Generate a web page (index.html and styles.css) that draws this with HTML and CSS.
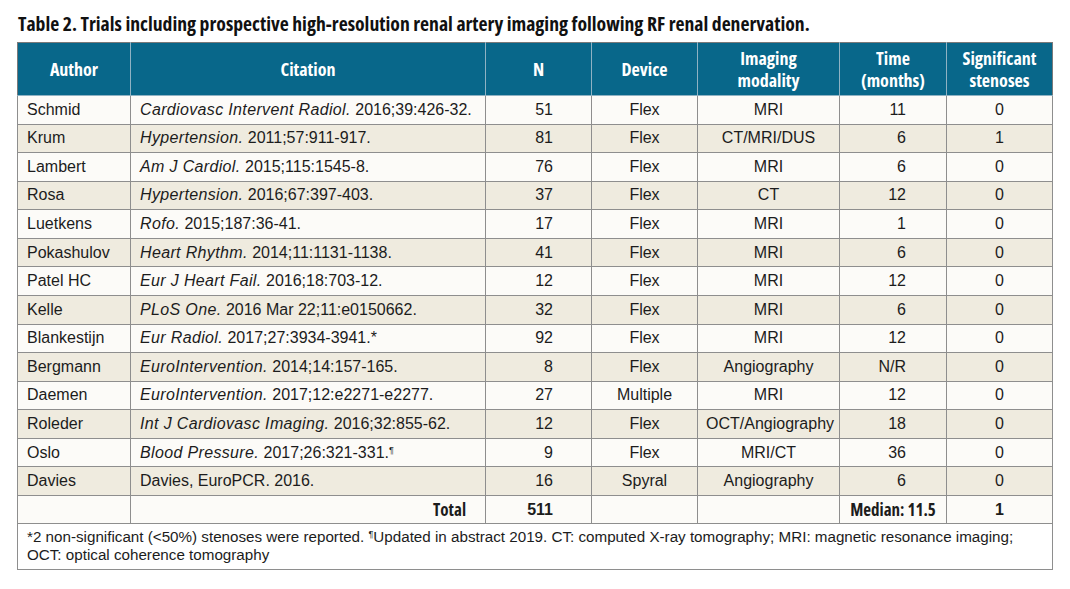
FILE: index.html
```html
<!DOCTYPE html>
<html lang="en">
<head>
<meta charset="utf-8">
<title>Table 2</title>
<link rel="stylesheet" href="styles.css">
</head>
<body>
<div class="page">
  <h1 class="caption">Table 2. Trials including prospective high-resolution renal artery imaging following RF renal denervation.</h1>
  <table class="trials">
    <colgroup>
      <col class="c-author">
      <col class="c-citation">
      <col class="c-n">
      <col class="c-device">
      <col class="c-imaging">
      <col class="c-time">
      <col class="c-sig">
    </colgroup>
    <thead>
      <tr>
        <th>Author</th>
        <th>Citation</th>
        <th>N</th>
        <th>Device</th>
        <th>Imaging<br>modality</th>
        <th>Time<br>(months)</th>
        <th>Significant<br>stenoses</th>
      </tr>
    </thead>
    <tbody>
      <tr><td class="l">Schmid</td><td class="l"><i>Cardiovasc Intervent Radiol.</i> 2016;39:426-32.</td><td class="n">51</td><td>Flex</td><td>MRI</td><td class="t">11</td><td>0</td></tr>
      <tr><td class="l">Krum</td><td class="l"><i>Hypertension.</i> 2011;57:911-917.</td><td class="n">81</td><td>Flex</td><td>CT/MRI/DUS</td><td class="t">6</td><td>1</td></tr>
      <tr><td class="l">Lambert</td><td class="l"><i>Am J Cardiol.</i> 2015;115:1545-8.</td><td class="n">76</td><td>Flex</td><td>MRI</td><td class="t">6</td><td>0</td></tr>
      <tr><td class="l">Rosa</td><td class="l"><i>Hypertension.</i> 2016;67:397-403.</td><td class="n">37</td><td>Flex</td><td>CT</td><td class="t">12</td><td>0</td></tr>
      <tr><td class="l">Luetkens</td><td class="l"><i>Rofo.</i> 2015;187:36-41.</td><td class="n">17</td><td>Flex</td><td>MRI</td><td class="t">1</td><td>0</td></tr>
      <tr><td class="l">Pokashulov</td><td class="l"><i>Heart Rhythm.</i> 2014;11:1131-1138.</td><td class="n">41</td><td>Flex</td><td>MRI</td><td class="t">6</td><td>0</td></tr>
      <tr><td class="l">Patel HC</td><td class="l"><i>Eur J Heart Fail.</i> 2016;18:703-12.</td><td class="n">12</td><td>Flex</td><td>MRI</td><td class="t">12</td><td>0</td></tr>
      <tr><td class="l">Kelle</td><td class="l"><i>PLoS One.</i> 2016 Mar 22;11:e0150662.</td><td class="n">32</td><td>Flex</td><td>MRI</td><td class="t">6</td><td>0</td></tr>
      <tr><td class="l">Blankestijn</td><td class="l"><i>Eur Radiol.</i> 2017;27:3934-3941.*</td><td class="n">92</td><td>Flex</td><td>MRI</td><td class="t">12</td><td>0</td></tr>
      <tr><td class="l">Bergmann</td><td class="l"><i>EuroIntervention.</i> 2014;14:157-165.</td><td class="n">8</td><td>Flex</td><td>Angiography</td><td class="t">N/R</td><td>0</td></tr>
      <tr><td class="l">Daemen</td><td class="l"><i>EuroIntervention.</i> 2017;12:e2271-e2277.</td><td class="n">27</td><td>Multiple</td><td>MRI</td><td class="t">12</td><td>0</td></tr>
      <tr><td class="l">Roleder</td><td class="l"><i>Int J Cardiovasc Imaging.</i> 2016;32:855-62.</td><td class="n">12</td><td>Flex</td><td>OCT/Angiography</td><td class="t">18</td><td>0</td></tr>
      <tr><td class="l">Oslo</td><td class="l"><i>Blood Pressure.</i> 2017;26:321-331.<sup class="pil">¶</sup></td><td class="n">9</td><td>Flex</td><td>MRI/CT</td><td class="t">36</td><td>0</td></tr>
      <tr><td class="l">Davies</td><td class="l">Davies, EuroPCR. 2016.</td><td class="n">16</td><td>Spyral</td><td>Angiography</td><td class="t">6</td><td>0</td></tr>
      <tr class="total"><td></td><td class="r cond">Total</td><td class="n">511</td><td></td><td></td><td class="cond">Median: 11.5</td><td>1</td></tr>
    </tbody>
    <tfoot>
      <tr><td colspan="7" class="note">*2 non-significant (&lt;50%) stenoses were reported. <sup class="pil">¶</sup>Updated in abstract 2019. CT: computed X-ray tomography; MRI: magnetic resonance imaging;<br>OCT: optical coherence tomography</td></tr>
    </tfoot>
  </table>
</div>
</body>
</html>
```
FILE: styles.css
```css
html, body {
  margin: 0;
  padding: 0;
  background: #ffffff;
}

.page {
  padding: 13px 0 0 17px;
  font-family: "Liberation Sans", Arial, sans-serif;
  color: #1c1c1c;
}

.caption {
  margin: 0 0 8px 1px;
  font-family: "Open Sans", sans-serif;
  font-stretch: 75%;
  font-weight: bold;
  font-size: 19.7px;
  line-height: 21px;
  color: #111;
}

.trials {
  border-collapse: collapse;
  table-layout: fixed;
  width: 1035px;
  border: 1.5px solid #7a7a7a;
  font-size: 16px;
}

.c-author { width: 113px; }
.c-citation { width: 355px; }
.c-n { width: 106px; }
.c-device { width: 106px; }
.c-imaging { width: 142px; }
.c-time { width: 107px; }
.c-sig { width: 106px; }

.trials thead th {
  background: #08678a;
  color: #ffffff;
  height: 52px;
  padding: 0 4px;
  font-family: "Open Sans", sans-serif;
  font-stretch: 75%;
  font-weight: bold;
  font-size: 18px;
  line-height: 22px;
  text-align: center;
  vertical-align: middle;
  border: 1px solid #8fb2c3;
  border-top-color: #7a7a7a;
}

.trials thead th:first-child { border-left-color: #7a7a7a; }
.trials thead th:last-child { border-right-color: #7a7a7a; }

.trials tbody td {
  height: 27.57px;
  padding: 0 8px;
  border: 1px solid #8e8e8e;
  text-align: center;
  vertical-align: middle;
  line-height: 18px;
  white-space: nowrap;
}

.trials tbody td i { letter-spacing: 0.35px; }

.trials tbody tr:nth-child(odd) td { background: #fcfbf8; }
.trials tbody tr:nth-child(even) td { background: #efebdf; }
.trials tbody tr.total td { background: #fcfbf8; font-weight: bold; }

.trials td.cond {
  font-family: "Open Sans", sans-serif;
  font-stretch: 75%;
  font-size: 17px;
}

.trials td.l { text-align: left; padding-left: 9px; }
.trials td.r { text-align: right; padding-right: 19px; }
.trials td.n { text-align: right; padding-right: 38px; }
.trials td.t { text-align: right; padding-right: 40px; }

.pil {
  font-size: 9px;
  font-style: normal;
  vertical-align: 5px;
  line-height: 0;
}

.trials tfoot td.note {
  background: #ffffff;
  border: 1px solid #8e8e8e;
  padding: 4px 9px 5px 9px;
  text-align: left;
  line-height: 18px;
  font-size: 15.2px;
}
```
